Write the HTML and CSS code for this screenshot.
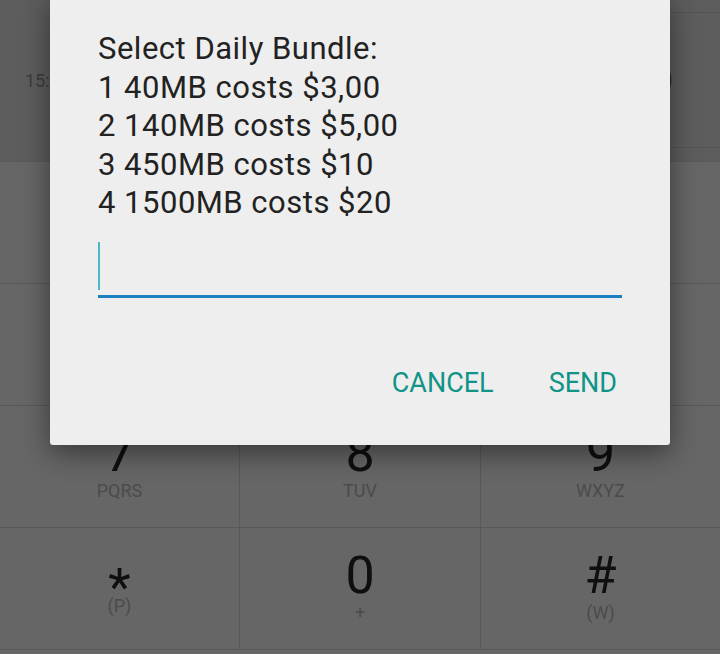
FILE: index.html
```html
<!DOCTYPE html>
<html>
<head>
<meta charset="utf-8">
<link rel="stylesheet" href="styles.css">
</head>
<body>
<div class="dialer">
  <div class="log">
    <div class="entry">
      <div class="time">15:</div>
      <div class="entry-body">
        <svg class="avatar" width="46" height="46" viewBox="0 0 46 46"><circle cx="23" cy="23" r="21.5" fill="none" stroke="#6a6a6a" stroke-width="2"/></svg>
      </div>
    </div>
  </div>
  <div class="keypad">
    <div class="key"></div>
    <div class="key"></div>
    <div class="key"></div>
    <div class="key"></div>
    <div class="key"></div>
    <div class="key"></div>
    <div class="key"><div class="digit">7</div><div class="letters">PQRS</div></div>
    <div class="key"><div class="digit">8</div><div class="letters">TUV</div></div>
    <div class="key"><div class="digit">9</div><div class="letters">WXYZ</div></div>
    <div class="key"><div class="digit star">*</div><div class="letters">(P)</div></div>
    <div class="key"><div class="digit">0</div><div class="letters">+</div></div>
    <div class="key"><div class="digit">#</div><div class="letters">(W)</div></div>
  </div>
</div>
<div class="scrim"></div>
<div class="dialog">
  <div class="msg">Select Daily Bundle:<br>1 40MB costs $3,00<br>2 140MB costs $5,00<br>3 450MB costs $10<br>4 1500MB costs $20</div>
  <div class="field"><span class="cursor"></span></div>
  <div class="actions">
    <span class="btn">CANCEL</span>
    <span class="btn">SEND</span>
  </div>
</div>
</body>
</html>
```
FILE: styles.css
```css
html, body {
  margin: 0;
  padding: 0;
}
body {
  width: 720px;
  height: 654px;
  overflow: hidden;
  font-family: Roboto, "Liberation Sans", sans-serif;
  background: #ffffff;
  position: relative;
}
.dialer {
  width: 720px;
}
.log {
  height: 161px;
  background: #e8e8e8;
  border-bottom: 1px solid #dcdcdc;
}
.entry {
  display: flex;
  height: 136px;
  padding-top: 12px;
}
.time {
  width: 60px;
  padding-left: 25px;
  font-size: 18px;
  color: #969696;
  display: flex;
  align-items: center;
}
.entry-body {
  flex: 1;
  border-top: 1px solid #d0d0d0;
  border-bottom: 1px solid #d0d0d0;
  display: flex;
  align-items: center;
  justify-content: flex-end;
  padding-right: 48px;
}
.avatar {
  display: block;
}
.keypad {
  display: grid;
  grid-template-columns: 239px 240px 1fr;
  grid-template-rows: repeat(4, 121px);
  gap: 1px;
  background: #dcdcdc;
  border-bottom: 1px solid #dcdcdc;
}
.key {
  background: #ffffff;
  display: flex;
  flex-direction: column;
  align-items: center;
  padding-top: 22px;
}
.digit {
  font-size: 52px;
  line-height: 52px;
  height: 52px;
  font-weight: 400;
  color: #262626;
}
.digit.star {
  padding-top: 12px;
  margin-bottom: -19px;
}
.letters {
  margin-top: 1px;
  font-size: 18px;
  line-height: 20px;
  color: #bcbcbc;
}
.scrim {
  position: absolute;
  inset: 0;
  background: rgba(0, 0, 0, 0.6);
}
.dialog {
  position: absolute;
  left: 50px;
  top: -8px;
  width: 620px;
  box-sizing: border-box;
  padding: 38px 48px 44px;
  background: #eeeeee;
  border-radius: 3px;
  box-shadow: 0 8px 28px rgba(0, 0, 0, 0.45);
}
.msg {
  font-size: 31px;
  line-height: 38.5px;
  letter-spacing: 0.5px;
  color: #222222;
}
.field {
  margin-top: 19.5px;
  padding-bottom: 5px;
  border-bottom: 3px solid #1a80c2;
  height: 48px;
}
.cursor {
  display: block;
  width: 2px;
  height: 48px;
  background: #4fb8c6;
}
.actions {
  margin-top: 67px;
  display: flex;
  justify-content: flex-end;
  gap: 55px;
  padding-right: 5px;
}
.btn {
  font-size: 27px;
  line-height: 36px;
  color: #109487;
}
```
